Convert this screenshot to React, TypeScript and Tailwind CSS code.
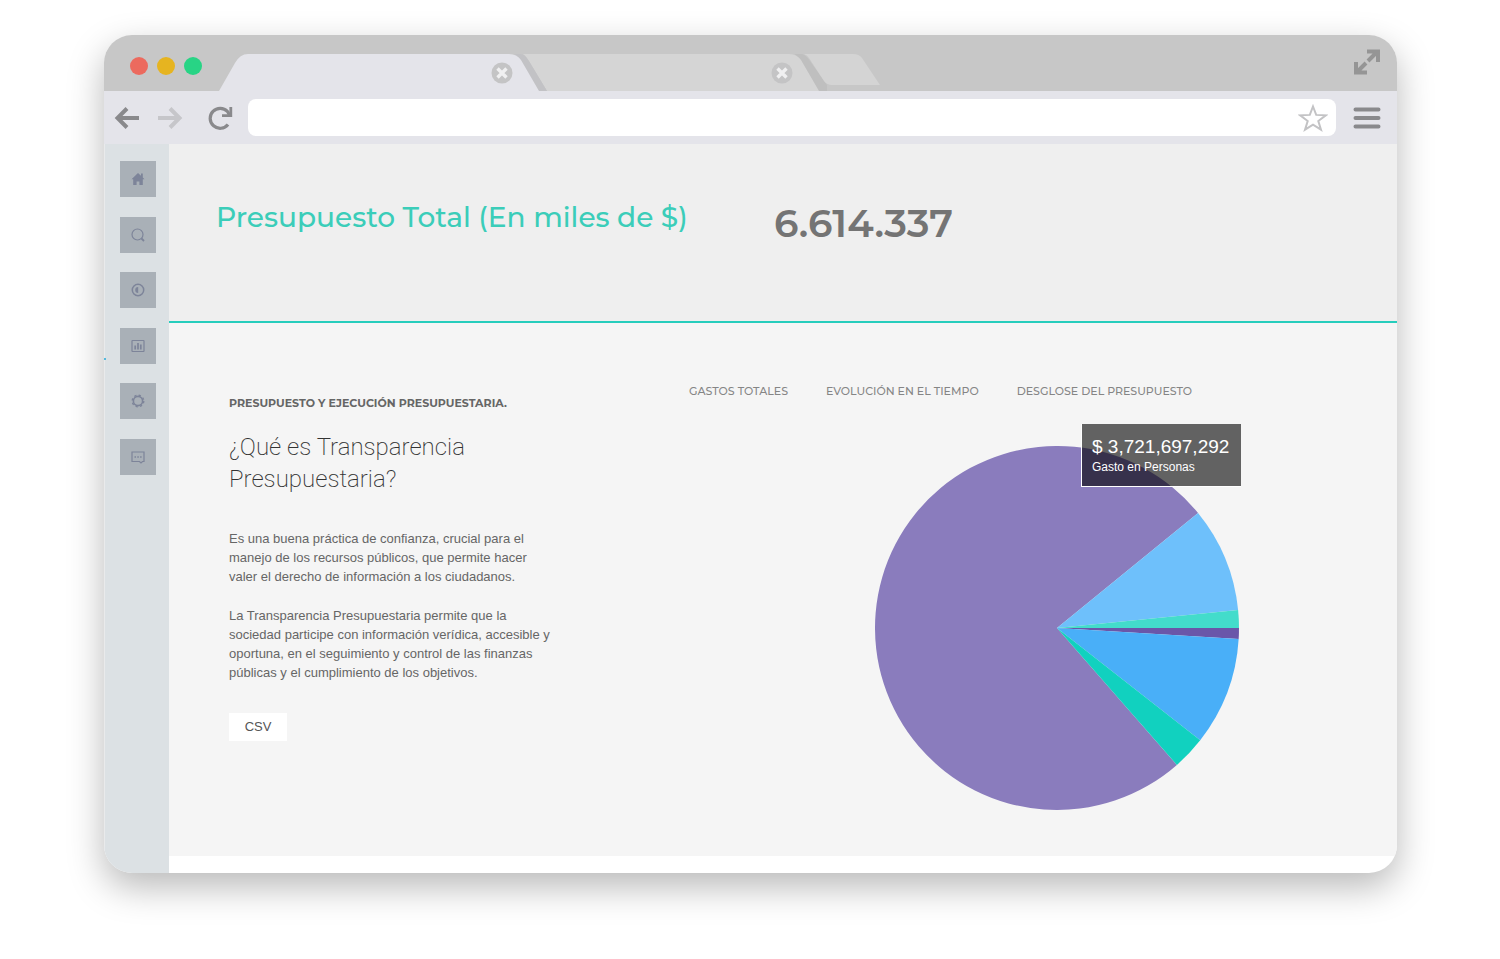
import type { ReactNode } from "react";

type Slice = { name: string; from: number; to: number; color: string };

const slices: Slice[] = [
  { name: "Gasto en Personas", from: 48.8, to: 320.8, color: "#8a7cbd" },
  { name: "Transferencias", from: 320.8, to: 354.3, color: "#6ec0fb" },
  { name: "Inversiones", from: 354.3, to: 360, color: "#43dccb" },
  { name: "Deuda", from: 0, to: 3.5, color: "#6a56a9" },
  { name: "Bienes y servicios", from: 3.5, to: 38.1, color: "#49aff8" },
  { name: "Otros gastos", from: 38.1, to: 48.8, color: "#11d1bf" },
];

function slicePath({ from, to }: Slice) {
  const r = 182;
  const point = (deg: number) => {
    const a = (deg * Math.PI) / 180;
    return `${(r + r * Math.cos(a)).toFixed(2)} ${(r + r * Math.sin(a)).toFixed(2)}`;
  };
  return `M${r} ${r}L${point(from)}A${r} ${r} 0 ${to - from > 180 ? 1 : 0} 1 ${point(to)}Z`;
}

function CloseButton({ className }: { className: string }) {
  return (
    <button type="button" aria-label="Cerrar pestaña" className={className}>
      <svg viewBox="0 0 22 22" className="size-[22px]">
        <circle cx="11" cy="11" r="10.5" fill="#c4c4c5" />
        <path d="M6.500 6.500l9 9M15.500 6.500l-9 9" stroke="#f0f0f1" strokeWidth="3.4" />
      </svg>
    </button>
  );
}

function TabStrip() {
  return (
    <div className="flex h-14 items-end bg-[#c7c7c7] pl-[26px]">
      <div className="mb-4 flex gap-[9px]">
        <button type="button" aria-label="Cerrar" className="size-[18px] rounded-full bg-[#ec6a5e]" />
        <button type="button" aria-label="Minimizar" className="size-[18px] rounded-full bg-[#e6b420]" />
        <button type="button" aria-label="Maximizar" className="size-[18px] rounded-full bg-[#28d485]" />
      </div>
      <div className="relative z-10 ml-[17px] flex h-[37px] w-[328px] items-center justify-end pr-[34px]">
        <svg viewBox="0 0 328 37" className="absolute inset-0 h-full w-full" aria-hidden="true">
          <path d="M296 0H302Q306 1 310 7L328 37H318L298 5Z" fill="#c2c2c5" />
          <path d="M0 37L16 9Q21 0 29 0H290Q298 0 302 6L320 37Z" fill="#e4e4ea" />
        </svg>
        <CloseButton className="relative" />
      </div>
      <div className="relative -ml-6 flex h-[37px] w-[304px] items-center justify-end pr-[34px]">
        <svg viewBox="0 0 304 37" className="absolute inset-0 h-full w-full" aria-hidden="true">
          <path d="M272 0H279Q283 1 287 7L304 31V37H290Z" fill="#bfbfbf" />
          <path d="M0 0H266Q274 0 278 6L296 37H24L4 4Q2 1 0 0Z" fill="#d5d5d5" />
        </svg>
        <CloseButton className="relative" />
      </div>
      <button type="button" aria-label="Nueva pestaña" className="relative -ml-[23px] h-[37px] w-[76px]">
        <svg viewBox="0 0 76 37" className="size-full">
          <path d="M0 0H49Q55 0 58 4L76 31H28Q23 31 20 27L5 4Q3 1 0 0Z" fill="#d4d4d4" />
        </svg>
      </button>
      <button type="button" aria-label="Pantalla completa" className="mr-[17px] mb-4 ml-auto">
        <svg viewBox="0 0 26 26" className="size-[26px]" fill="none" stroke="#959595" strokeWidth="4">
          <path d="M13 2.500H24V13M23.500 2.500L14 12" />
          <path d="M2 13V23.500H13M2.500 23.500L12 14" />
        </svg>
      </button>
    </div>
  );
}

function Toolbar() {
  return (
    <div className="flex h-[53px] items-center bg-[#e4e4ea] pr-4 pl-[10px]">
      <button type="button" aria-label="Atrás">
        <svg viewBox="0 0 26 26" className="size-[26px]" fill="none" stroke="#89898c" strokeWidth="4">
          <path d="M13 3.500L3.500 13L13 22.500M3.500 13H25" />
        </svg>
      </button>
      <button type="button" aria-label="Adelante" className="ml-[17px]">
        <svg viewBox="0 0 26 26" className="size-[26px]" fill="none" stroke="#c6c6ca" strokeWidth="4">
          <path d="M13 3.500L22.500 13L13 22.500M22.500 13H1" />
        </svg>
      </button>
      <button type="button" aria-label="Recargar" className="ml-6">
        <svg viewBox="0 0 26 26" className="size-[26px]" fill="none" stroke="#89898c" strokeWidth="3.200">
          <path d="M21 19.500A10 10 0 1 1 20.500 6.500L22.500 10" />
          <path d="M23.800 2V10.600H15" strokeWidth="2.800" />
        </svg>
      </button>
      <div className="ml-[15px] flex h-[37px] flex-1 items-center rounded-lg bg-white pr-2">
        <input type="text" aria-label="Dirección" className="h-full min-w-0 flex-1 bg-transparent px-3 text-sm outline-none" />
        <button type="button" aria-label="Añadir a favoritos">
          <svg viewBox="0 0 30 28" className="h-7 w-[30px]" fill="none" stroke="#c3c3c5" strokeWidth="2">
            <path d="M15 2.500L18.200 10.900L27.800 11.300L20.300 17L23 25.700L15 20.700L7 25.700L9.700 17L2.200 11.300L11.800 10.900Z" />
          </svg>
        </button>
      </div>
      <button type="button" aria-label="Menú" className="ml-[17px]">
        <svg viewBox="0 0 28 22" className="h-[22px] w-7" stroke="#89898c" strokeWidth="4" strokeLinecap="round">
          <path d="M2.500 2.500H25.500M2.500 11H25.500M2.500 19.500H25.500" />
        </svg>
      </button>
    </div>
  );
}

const navItems: { label: string; icon: ReactNode }[] = [
  {
    label: "Inicio",
    icon: <path d="M7 1L0.500 7.200H2.200V13H5.600V9.500H8.400V13H11.800V7.200H13.500L11.800 5.500V1.500H10V3.800Z" fill="#7d8499" stroke="none" />,
  },
  {
    label: "Buscar",
    icon: (
      <>
        <circle cx="6.500" cy="6.500" r="5.500" />
        <path d="M10.500 10.500L13 13" strokeWidth="1.800" />
      </>
    ),
  },
  {
    label: "Gasto",
    icon: (
      <>
        <circle cx="7" cy="7" r="5.700" strokeWidth="1.500" />
        <path d="M7.200 4A3 3 0 0 0 7.200 10Z" fill="#7d8499" stroke="none" />
      </>
    ),
  },
  {
    label: "Estadísticas",
    icon: (
      <>
        <rect x="1" y="1.500" width="12" height="11" rx="0.500" />
        <path d="M4.200 10.500V6.500M7 10.500V4M9.800 10.500V5.500" strokeWidth="1.700" />
      </>
    ),
  },
  {
    label: "Configuración",
    icon: (
      <>
        <circle cx="7" cy="7" r="4.600" strokeWidth="1.600" />
        <circle cx="7" cy="7" r="5.800" strokeWidth="1.300" strokeDasharray="2.278 2.277" />
      </>
    ),
  },
  {
    label: "Comentarios",
    icon: (
      <>
        <path d="M1 2H13V11.500H11.500L10 13L8.500 11.500H1Z" />
        <path d="M3.500 7H5M6.300 7H7.800M9.100 7H10.600" strokeWidth="1.600" />
      </>
    ),
  },
];

function Sidebar() {
  return (
    <nav aria-label="Principal" className="relative w-[65px] shrink-0 border-l border-[#e9eaeb] bg-[#dce1e4] pt-[17px] pl-[2px]">
      <span className="absolute top-[214px] -left-px h-[2px] w-[2px] bg-[#55b9dd]" />
      <div className="flex h-[314px] flex-col items-center justify-between">
        {navItems.map((item) => (
          <button key={item.label} type="button" aria-label={item.label} className="flex size-9 items-center justify-center bg-[#a9b0b7]">
            <svg viewBox="0 0 14 14" className="size-[14px]" fill="none" stroke="#7d8499" strokeWidth="1.200">
              {item.icon}
            </svg>
          </button>
        ))}
      </div>
    </nav>
  );
}

function PieChart() {
  return (
    <div className="relative mt-[45px] ml-auto size-[364px]">
      <svg viewBox="0 0 364 364" className="size-full" role="img" aria-label="Desglose del gasto">
        {slices.map((slice) => (
          <path key={slice.name} d={slicePath(slice)} fill={slice.color} />
        ))}
      </svg>
      <div className="absolute -top-[22px] left-[206px] border-b border-l border-white bg-black/60 bg-clip-padding py-[11px] pr-3 pl-[10px] whitespace-nowrap text-white">
        <p className="text-[19px] leading-6">$ 3,721,697,292</p>
        <p className="text-xs leading-4">Gasto en Personas</p>
      </div>
    </div>
  );
}

export default function App() {
  return (
    <div className="min-h-screen bg-white pt-[35px] pr-[103px] pb-[86px] pl-[104px] font-['Liberation_Sans',sans-serif]">
      <div className="overflow-hidden rounded-[28px] bg-white shadow-[0_14px_36px_rgba(0,0,0,0.28)]">
        <TabStrip />
        <Toolbar />
        <div className="flex">
          <Sidebar />
          <main className="min-w-0 flex-1 pb-[17px]">
            <header className="flex h-[179px] border-b-2 border-[#26cdbc] bg-[#efefef] pt-[52px] pl-[47px] font-['Montserrat','Inter',sans-serif]">
              <h1 className="w-[558px] text-[28px] leading-[42px] font-medium text-[#3bcdb9]">Presupuesto Total (En miles de $)</h1>
              <p className="text-[39px] leading-[54px] font-semibold text-[#747474]">6.614.337</p>
            </header>
            <section className="flex bg-[#f5f5f5] pt-[58px] pr-[158px] pb-[46px] pl-[60px]">
              <div className="w-[460px] shrink-0 pt-3 text-[#666666]">
                <h3 className="font-['Montserrat','Inter',sans-serif] text-[11px] leading-5 font-bold">
                  PRESUPUESTO Y EJECUCIÓN PRESUPUESTARIA.
                </h3>
                <h2 className="mt-[18px] font-['Helvetica_Neue','Roboto',sans-serif] text-2xl leading-8 font-extralight text-[#333333]">
                  ¿Qué es Transparencia
                  <br />
                  Presupuestaria?
                </h2>
                <div className="mt-[34px] flex flex-col gap-5 text-[13px] leading-[19px]">
                  <p>
                    Es una buena práctica de confianza, crucial para el
                    <br />
                    manejo de los recursos públicos, que permite hacer
                    <br />
                    valer el derecho de información a los ciudadanos.
                  </p>
                  <p>
                    La Transparencia Presupuestaria permite que la
                    <br />
                    sociedad participe con información verídica, accesible y
                    <br />
                    oportuna, en el seguimiento y control de las finanzas
                    <br />
                    públicas y el cumplimiento de los objetivos.
                  </p>
                </div>
                <button type="button" className="mt-[31px] h-7 w-[58px] bg-white text-[13px] text-[#555555]">
                  CSV
                </button>
              </div>
              <div className="min-w-0 flex-1">
                <nav aria-label="Gráficos" className="flex gap-[38px] font-['Montserrat','Inter',sans-serif] text-[11px] leading-5 font-medium whitespace-nowrap text-[#858585]">
                  <a href="#gastos">GASTOS TOTALES</a>
                  <a href="#evolucion">EVOLUCIÓN EN EL TIEMPO</a>
                  <a href="#desglose">DESGLOSE DEL PRESUPUESTO</a>
                </nav>
                <PieChart />
              </div>
            </section>
          </main>
        </div>
      </div>
    </div>
  );
}
